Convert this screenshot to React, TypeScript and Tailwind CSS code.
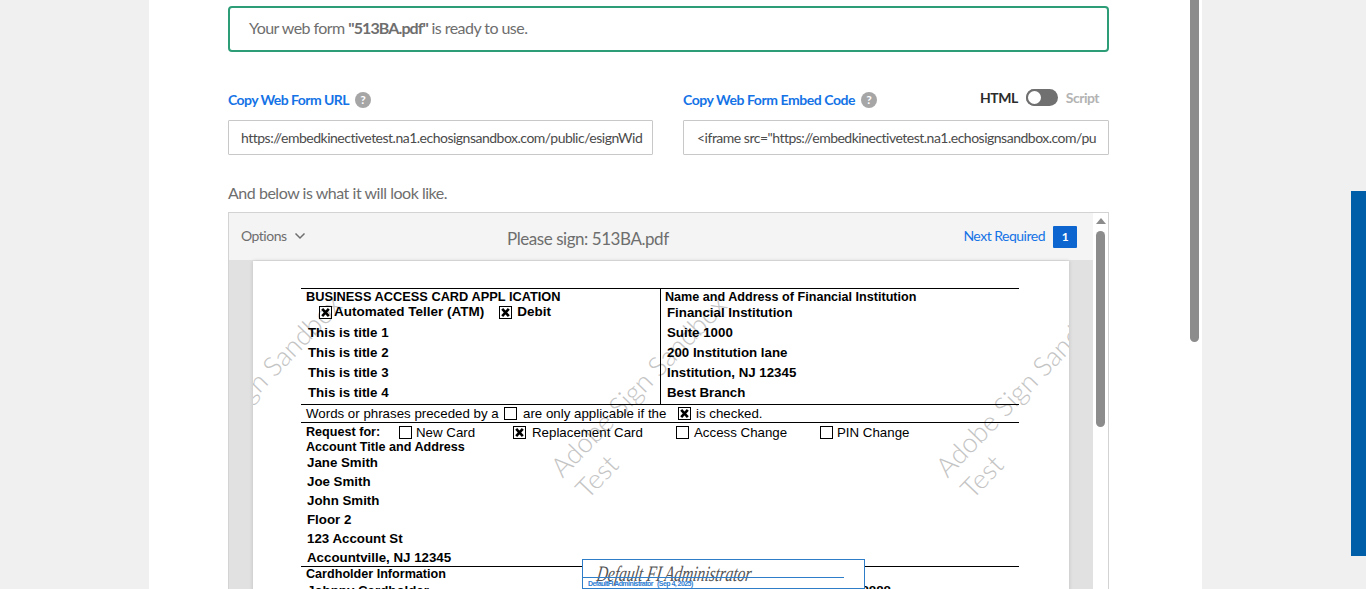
const uiFont = { fontFamily: "Lato, 'Noto Sans', sans-serif" };
const pdfFont = { fontFamily: "'Liberation Sans', Arial, sans-serif" };

function HelpIcon() {
  return (
    <span className="flex h-4 w-4 shrink-0 items-center justify-center rounded-full bg-[#a6a6a6] text-[12px] font-bold leading-none tracking-normal text-white">
      ?
    </span>
  );
}

function Box({ checked = false }: { checked?: boolean }) {
  return (
    <svg width="13" height="13" viewBox="0 0 13 13" className="shrink-0">
      <rect x="0.5" y="0.5" width="12" height="12" fill="none" stroke="black" />
      {checked && <path d="M3.2 2.8 L9.8 10.2 M9.8 2.8 L3.2 10.2" stroke="black" strokeWidth="2.6" />}
    </svg>
  );
}

function Watermark({ className }: { className: string }) {
  return (
    <div
      className={`pointer-events-none absolute origin-top-left -rotate-[46deg] whitespace-nowrap text-[27px] font-light leading-[33px] text-[#c4c4c4] ${className}`}
      style={uiFont}
    >
      Adobe Sign Sandbox
      <br />
      <span className="ml-[2px]">Test</span>
    </div>
  );
}

const leftRows = ["This is title 1", "This is title 2", "This is title 3", "This is title 4"];
const rightRows = ["Suite 1000", "200 Institution lane", "Institution, NJ 12345", "Best Branch"];
const accountRows = ["Jane Smith", "Joe Smith", "John Smith", "Floor 2", "123 Account St", "Accountville, NJ 12345"];

function PdfPage() {
  return (
    <div className="relative mx-[24px] h-[400px] overflow-hidden bg-white pl-[48px] pt-[27px] text-black shadow-[0_0_4px_rgba(0,0,0,0.15)]" style={pdfFont}>
      <Watermark className="left-[-95px] top-[199px]" />
      <Watermark className="left-[290px] top-[199px]" />
      <Watermark className="left-[675px] top-[199px]" />

      <div className="relative w-[718px]">
        <div className="flex h-[117px] border-y border-black">
          <div className="w-[360px] border-r border-black">
            <div className="flex h-[15px] items-center pl-[5px] text-[12.8px] font-bold">BUSINESS ACCESS CARD APPL ICATION</div>
            <div className="flex h-[16px] items-center pl-[18px] text-[13.5px] font-bold">
              <Box checked />
              <span className="ml-[2px] pt-[1px]">Automated Teller (ATM)</span>
              <span className="ml-[15px]"><Box checked /></span>
              <span className="ml-[5px] pt-[1px]">Debit</span>
            </div>
            <div className="mt-[2px]">
              {leftRows.map((row) => (
                <div key={row} className="flex h-[20px] items-center pl-[7px] pt-[1px] text-[13.3px] font-bold">{row}</div>
              ))}
            </div>
          </div>
          <div className="flex-1">
            <div className="flex h-[15px] items-center pl-[4px] pt-[1px] text-[12.6px] font-bold">Name and Address of Financial Institution</div>
            <div className="flex h-[16px] items-center pl-[6px] pt-[1px] text-[13.3px] font-bold">Financial Institution</div>
            <div className="mt-[2px]">
              {rightRows.map((row) => (
                <div key={row} className="flex h-[20px] items-center pl-[6px] pt-[1px] text-[13.3px] font-bold">{row}</div>
              ))}
            </div>
          </div>
        </div>

        <div className="flex h-[18px] items-center border-b border-black pl-[5px] text-[13.3px]">
          <span className="w-[198px]">Words or phrases preceded by a</span>
          <Box />
          <span className="ml-[6px] w-[155px]">are only applicable if the</span>
          <Box checked />
          <span className="ml-[5px]">is checked.</span>
        </div>

        <div className="h-[144px] border-b border-black">
          <div className="flex h-[17px] items-center pl-[5px] pt-[2px] text-[13.3px]">
            <span className="w-[93px] text-[12.6px] font-bold">Request for:</span>
            <span className="flex w-[114px] items-center gap-[4px]"><Box />New Card</span>
            <span className="flex w-[163px] items-center gap-[6px]"><Box checked />Replacement Card</span>
            <span className="flex w-[144px] items-center gap-[5px]"><Box />Access Change</span>
            <span className="flex items-center gap-[4px]"><Box />PIN Change</span>
          </div>
          <div className="flex h-[12px] items-center pl-[5px] pt-[2px] text-[12.6px] font-bold">Account Title and Address</div>
          <div className="mt-[1px]">
            {accountRows.map((row) => (
              <div key={row} className="flex h-[19px] items-center pl-[6px] text-[13.3px] font-bold">{row}</div>
            ))}
          </div>
        </div>

        <div className="flex h-[14px] items-center pl-[5px] text-[12.6px] font-bold">Cardholder Information</div>
        <div className="flex items-center justify-between pl-[6px] pr-[128px] text-[13.3px] font-bold">
          <span>Johnny Cardholder</span>
          <span>8888 8888 8888 8888</span>
        </div>
      </div>

      {/* signature field sits on top of the page */}
      <div className="absolute left-[329px] top-[298px] h-[30px] w-[283px] border border-[#2d7dc8] bg-white">
        <div
          className="absolute left-[14px] top-[1px] origin-left -skew-x-12 scale-x-[0.7] whitespace-nowrap text-[22px] italic leading-[26px] text-[#555555]"
          style={{ fontFamily: "'Liberation Serif', serif" }}
        >
          Default FI Administrator
        </div>
        <div className="absolute left-0 top-[17px] h-px w-[261px] bg-[#2d7dc8]" />
        <div className="absolute left-[5px] top-[19px] whitespace-nowrap text-[7px] font-bold leading-[9px] tracking-[-0.55px] text-[#2d7dd2]">
          DefaultFI Administrator &nbsp;&nbsp;(Sep 4, 2025)
        </div>
      </div>
    </div>
  );
}

export default function App() {
  return (
    <div className="flex h-[589px] overflow-hidden bg-[#f0f0f0]" style={uiFont}>
      <main className="ml-[149px] h-[589px] w-[1041px] shrink-0 bg-white pl-[79px] pt-[6px]">
        <div className="w-[881px]">
          <div className="flex h-[46px] items-center rounded border-2 border-[#2d9d78] pb-[2px] pl-[19px] text-[16px] tracking-[-0.55px] text-[#6e6e6e]">
            <span>
              Your web form <b className="tracking-[-0.9px]">"513BA.pdf"</b> is ready to use.
            </span>
          </div>

          <div className="mt-[32px] flex justify-between">
            <div className="w-[425px]">
              <div className="flex h-[32px] items-center gap-[6px] pb-[1px] text-[14px] font-bold tracking-[-0.55px] text-[#1473e6]">
                Copy Web Form URL <HelpIcon />
              </div>
              <div className="mt-[4px] flex h-[35px] items-center overflow-hidden whitespace-nowrap rounded-[1px] border border-[#c8c8c8] px-[12px] text-[14px] tracking-[-0.5px] text-[#4b4b4b]">
                https://embedkinectivetest.na1.echosignsandbox.com/public/esignWid
              </div>
            </div>
            <div className="w-[426px]">
              <div className="flex h-[32px] items-center justify-between">
                <div className="flex items-center gap-[6px] pb-[1px] text-[14px] font-bold tracking-[-0.44px] text-[#1473e6]">
                  Copy Web Form Embed Code <HelpIcon />
                </div>
                <div className="mr-[10px] flex items-center gap-[8px] pb-[6px] text-[14px] font-bold tracking-[-0.5px]">
                  <span className="text-[#2c2c2c]">HTML</span>
                  <span className="flex h-[17px] w-[32px] items-center rounded-full bg-[#707070]">
                    <span className="h-[17px] w-[17px] rounded-full border-2 border-[#707070] bg-white" />
                  </span>
                  <span className="text-[#b3b3b3]">Script</span>
                </div>
              </div>
              <div className="mt-[4px] flex h-[35px] items-center overflow-hidden whitespace-nowrap rounded-[1px] border border-[#c8c8c8] px-[13px] text-[14px] tracking-[-0.5px] text-[#4b4b4b]">
                {'<iframe src="https://embedkinectivetest.na1.echosignsandbox.com/pu'}
              </div>
            </div>
          </div>

          <p className="mt-[27px] text-[16px] leading-[22px] tracking-[-0.47px] text-[#6e6e6e]">And below is what it will look like.</p>

          <div className="mt-[8px] flex border border-[#d3d3d3] bg-[#e1e1e1]">
            <div className="w-[864px]">
              <div className="flex h-[48px] items-center border-b border-[#e1e1e1] bg-[#f4f4f4] pl-[12px] pr-[16px]">
                <div className="flex w-[266px] items-center gap-[7px] pb-[2px] text-[14px] tracking-[-0.5px] text-[#6e6e6e]">
                  Options
                  <svg width="12" height="8" viewBox="0 0 12 8" fill="none" stroke="#6e6e6e" strokeWidth="1.5">
                    <path d="M1.5 1.5 L6 6 L10.5 1.5" />
                  </svg>
                </div>
                <div className="pt-[4px] text-[17px] tracking-[-0.45px] text-[#6e6e6e]">Please sign: 513BA.pdf</div>
                <div className="ml-auto flex items-center gap-[8px] text-[14px] tracking-[-0.5px] text-[#1473e6]">
                  <span className="pb-[3px]">Next Required</span>
                  <span className="mt-[1px] flex h-[22px] w-[24px] items-center justify-center rounded-[1px] bg-[#0d66d0] text-[12px] font-bold text-white">1</span>
                </div>
              </div>
              <PdfPage />
            </div>
            <div className="flex w-[15px] flex-col items-center bg-white">
              <div className="mt-[5px] h-0 w-0 border-x-[5px] border-b-[6px] border-x-transparent border-b-[#8c8c8c]" />
              <div className="mt-[7px] h-[196px] w-[9px] rounded-full bg-[#8c8c8c]" />
            </div>
          </div>
        </div>
      </main>

      <div className="w-[12px] shrink-0 bg-white">
        <div className="h-[342px] w-[9px] rounded-b-full bg-[#8c8c8c]" />
      </div>

      <div className="flex-1" />
      <div className="mt-[191px] h-[365px] w-[15px] shrink-0 bg-[#005ea8]" />
    </div>
  );
}
